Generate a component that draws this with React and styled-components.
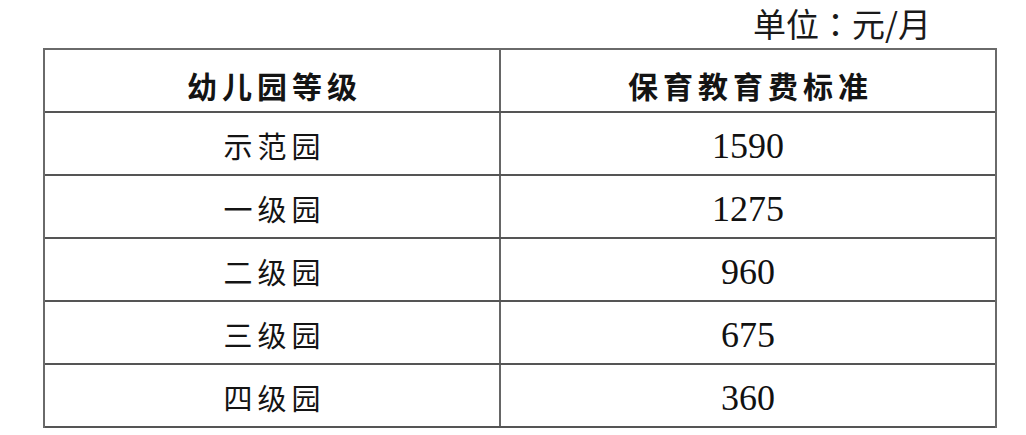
import React from "react";
import styled, { createGlobalStyle } from "styled-components";

const GlobalStyle = createGlobalStyle`
  html, body {
    margin: 0;
    padding: 0;
    background: #fff;
  }
  body {
    font-family: "Noto Sans CJK SC", "Liberation Sans", sans-serif;
    color: #111;
  }
`;

const rows = [
  { level: "示范园", fee: "1590" },
  { level: "一级园", fee: "1275" },
  { level: "二级园", fee: "960" },
  { level: "三级园", fee: "675" },
  { level: "四级园", fee: "360" },
];

const Page = styled.div`
  width: 1026px;
  height: 435px;
  padding-left: 43px;
  box-sizing: border-box;
  overflow: hidden;
`;

const Unit = styled.div`
  width: 954px;
  height: 48px;
  box-sizing: border-box;
  padding-right: 66px;
  padding-bottom: 2px;
  display: flex;
  justify-content: flex-end;
  align-items: center;
  font-family: "Noto Sans CJK TC", "Noto Sans CJK SC", sans-serif;
  font-size: 33px;
  font-weight: 400;
  line-height: 1;
  color: #1a1a1a;
`;

const Table = styled.div`
  width: 954px;
  border: 2px solid #6a6a6a;
  border-bottom: none;
  box-sizing: border-box;
`;

const Row = styled.div`
  display: grid;
  grid-template-columns: 456px 1fr;
  height: 63px;
  box-sizing: border-box;
  border-bottom: 2px solid #555;
`;

const Cell = styled.div`
  display: flex;
  align-items: center;
  justify-content: center;
  padding-top: ${(p) => (p.$head ? "9px" : "4px")};
  box-sizing: border-box;
  border-right: ${(p) => (p.$first ? "2px solid #666" : "none")};
`;

const CnText = styled.span`
  font-family: "Noto Sans CJK SC", sans-serif;
  font-size: ${(p) => (p.$head ? "30px" : "29px")};
  font-weight: ${(p) => (p.$head ? 700 : 400)};
  letter-spacing: 5px;
  margin-right: -5px;
  line-height: 1;
  color: #141414;
`;

const Num = styled.span`
  font-family: "Liberation Serif", "Times New Roman", serif;
  font-size: 36px;
  line-height: 1;
  color: #111;
`;

export default function App() {
  return (
    <Page>
      <GlobalStyle />
      <Unit>单位：元/月</Unit>
      <Table>
        <Row>
          <Cell $head $first>
            <CnText $head>幼儿园等级</CnText>
          </Cell>
          <Cell $head>
            <CnText $head>保育教育费标准</CnText>
          </Cell>
        </Row>
        {rows.map((r) => (
          <Row key={r.level}>
            <Cell $first>
              <CnText>{r.level}</CnText>
            </Cell>
            <Cell>
              <Num>{r.fee}</Num>
            </Cell>
          </Row>
        ))}
      </Table>
    </Page>
  );
}
